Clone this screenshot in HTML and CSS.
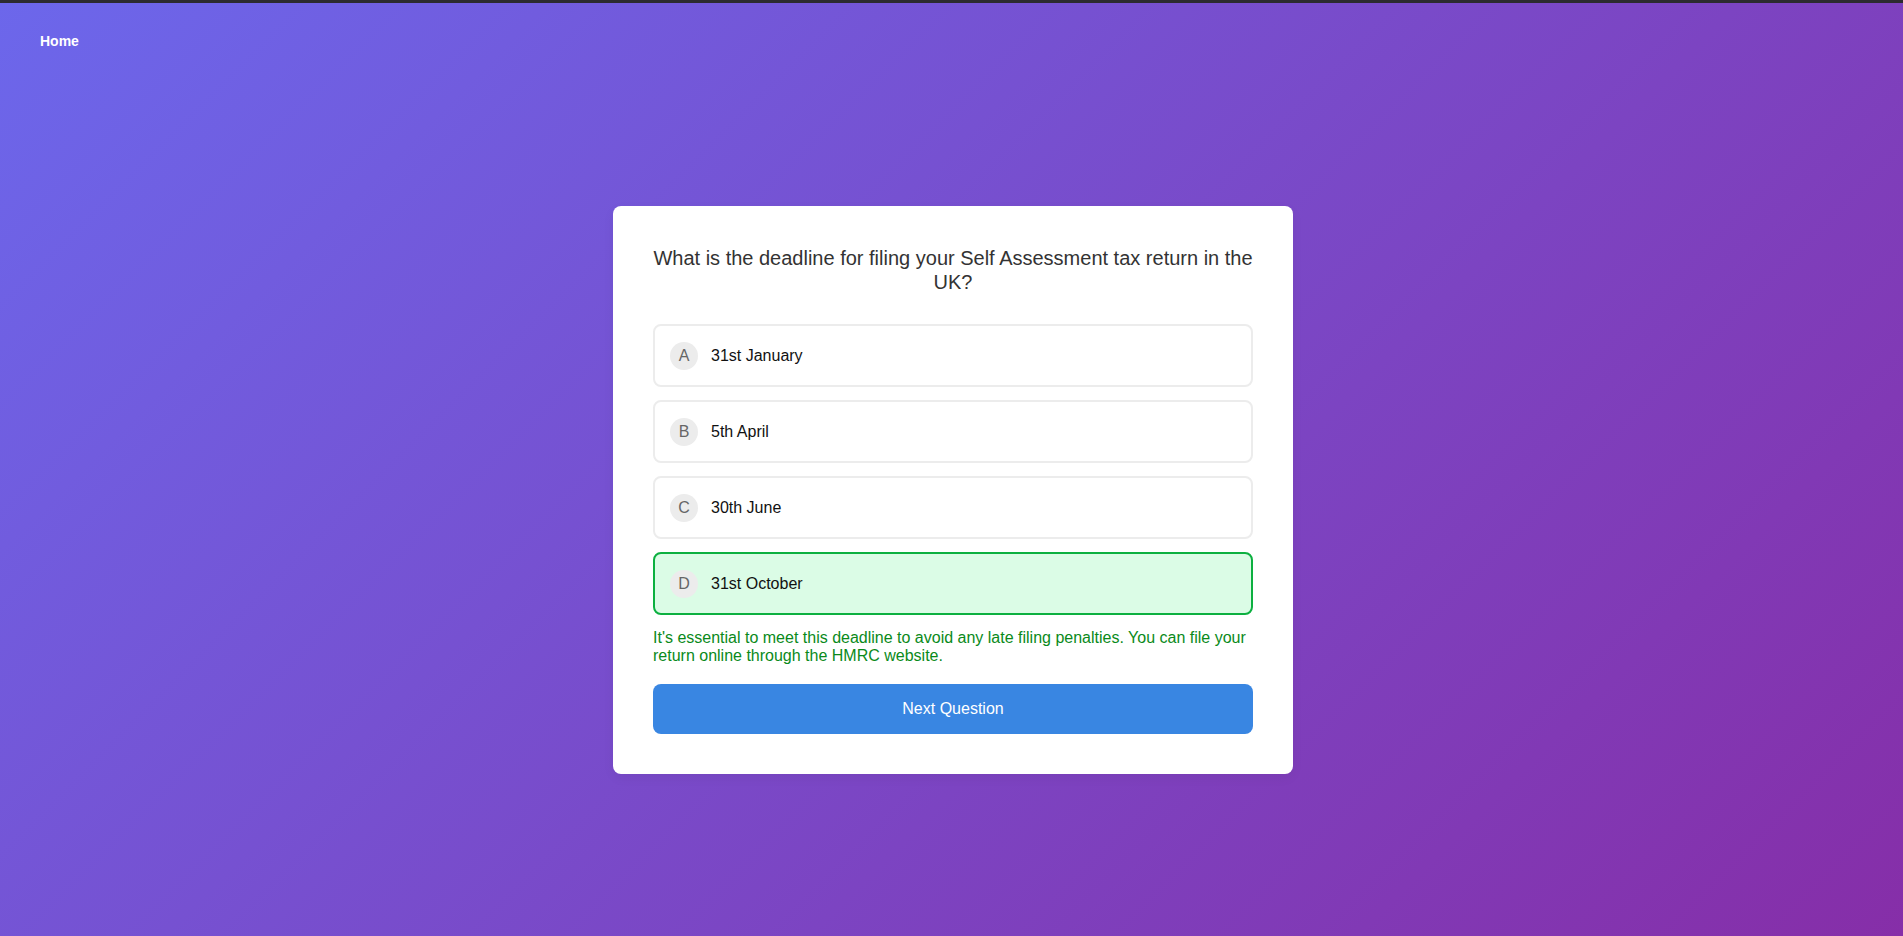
FILE: index.html
```html
<!DOCTYPE html>
<html lang="en">
<head>
<meta charset="utf-8">
<title>Quiz</title>
<link rel="stylesheet" href="styles.css">
</head>
<body>
<nav class="topnav"><a class="home-link" href="#">Home</a></nav>
<main class="stage">
  <section class="quiz-card">
    <h2 class="question">What is the deadline for filing your Self Assessment tax return in the UK?</h2>
    <div class="options">
      <div class="option"><span class="letter">A</span><span class="label">31st January</span></div>
      <div class="option"><span class="letter">B</span><span class="label">5th April</span></div>
      <div class="option"><span class="letter">C</span><span class="label">30th June</span></div>
      <div class="option correct"><span class="letter">D</span><span class="label">31st October</span></div>
    </div>
    <p class="feedback">It's essential to meet this deadline to avoid any late filing penalties. You can file your return online through the HMRC website.</p>
    <button class="next-btn" type="button">Next Question</button>
  </section>
</main>
</body>
</html>
```
FILE: styles.css
```css
* { box-sizing: border-box; }
html, body { height: 100%; }
body {
  margin: 0;
  border-top: 3px solid #2c2b30;
  min-height: 100vh;
  display: flex;
  flex-direction: column;
  font-family: "Liberation Sans", Arial, sans-serif;
  background: linear-gradient(135deg, #6c67eb 0%, #862ea8 100%);
}
.topnav {
  padding: 30px 40px 0;
  line-height: 16px;
}
.home-link {
  color: #ffffff;
  font-size: 14px;
  font-weight: bold;
  text-decoration: none;
}
.stage {
  flex: 1;
  display: flex;
  align-items: center;
  justify-content: center;
  padding: 0 0 5px 3px;
}
.quiz-card {
  width: 680px;
  background: #ffffff;
  border-radius: 8px;
  padding: 40px;
  box-shadow: 0 4px 12px rgba(0, 0, 0, 0.05);
}
.question {
  margin: 0 0 30px;
  font-size: 20px;
  line-height: 24px;
  font-weight: normal;
  color: #333333;
  text-align: center;
}
.options { display: flex; flex-direction: column; gap: 13px; }
.option {
  height: 63px;
  display: flex;
  align-items: center;
  padding: 0 15px;
  border: 2px solid #ececec;
  border-radius: 8px;
  background: #ffffff;
  font-size: 16px;
  color: #111111;
}
.option.correct {
  border-color: #0cb040;
  background: #dbfce6;
}
.letter {
  width: 28px;
  height: 28px;
  border-radius: 50%;
  background: #ececec;
  color: #666666;
  display: flex;
  align-items: center;
  justify-content: center;
  margin-right: 13px;
  font-size: 16px;
}
.feedback {
  margin: 14px 0 19px;
  font-size: 16px;
  line-height: 18px;
  color: #0a8a1a;
}
.next-btn {
  display: block;
  width: 100%;
  height: 50px;
  border: none;
  border-radius: 8px;
  background: #3986e2;
  color: #ffffff;
  font-family: "Liberation Sans", Arial, sans-serif;
  font-size: 16px;
  cursor: pointer;
}
```
